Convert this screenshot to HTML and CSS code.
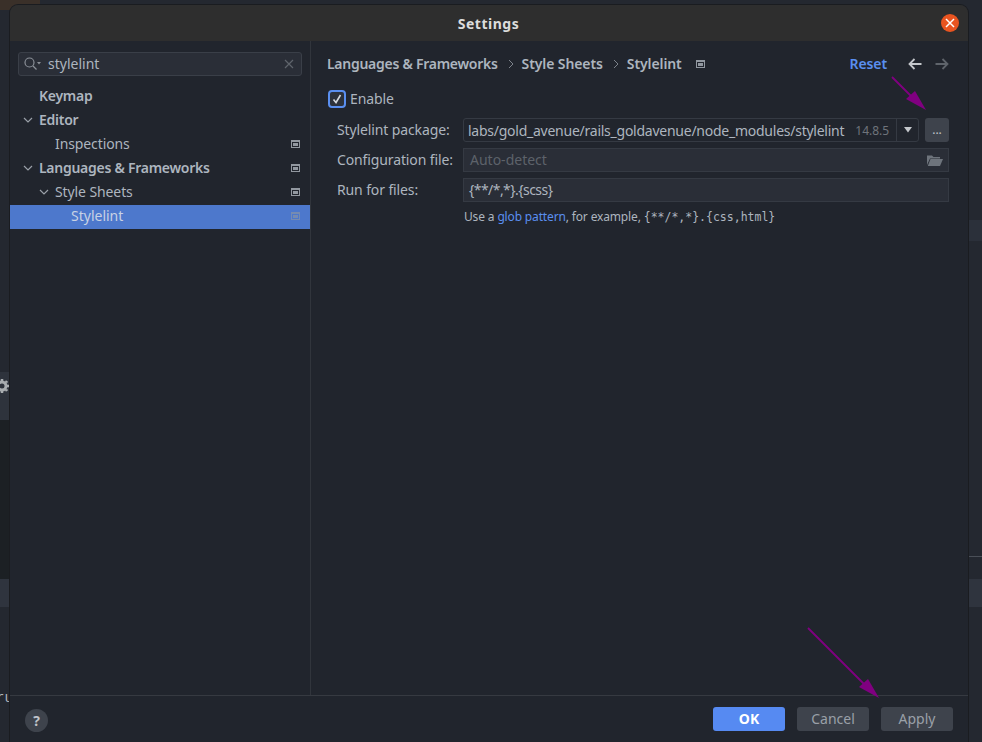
FILE: index.html
```html
<!DOCTYPE html>
<html lang="en">
<head>
    <meta charset="UTF-8">
    <title>Settings</title>
    <link rel="stylesheet" href="styles.css">
</head>
<body>
    <!-- editor behind the dialog -->
    <div class="backdrop">
        <div class="bg-tab"></div>
        <div class="bg-code">
            <span class="bg-num">76</span>
            <span class="bg-brace">{}</span>
            <span class="bg-key">"devDependencies"</span>
            <span class="bg-colon">:</span>
            <span class="bg-caret"></span>
        </div>
        <div class="bg-tool"><svg width="16" height="16" viewBox="0 0 16 16"><circle cx="2" cy="8" r="4" fill="none" stroke="#a9adb0" stroke-width="3"/><path d="M2 1v2M2 13v2M7 3L6 4.500M7 13l-1-1.500M9 8H7" stroke="#a9adb0" stroke-width="2.500"/></svg></div>
        <div class="bg-dark"></div>
        <div class="bg-strip-l"></div>
        <div class="bg-run">ru</div>
        <div class="bg-patch-r1"></div>
        <div class="bg-line-r"></div>
        <div class="bg-patch-r2"></div>
    </div>

    <div class="dialog">
        <div class="titlebar">
            <span class="title">Settings</span>
            <span class="close"><svg width="10" height="10" viewBox="0 0 10 10"><path d="M1 1l8 8M9 1l-8 8" stroke="#fff" stroke-width="1.500"/></svg></span>
        </div>

        <div class="main">
            <div class="sidebar">
                <div class="search">
                    <svg class="search-icon" width="20" height="16" viewBox="0 0 20 16"><circle cx="6.500" cy="6.500" r="4.500" fill="none" stroke="#8b9098" stroke-width="1.200"/><path d="M10 10l3.500 3.500" stroke="#8b9098" stroke-width="1.200"/><path d="M14 6h4l-2 2.500z" fill="#8b9098"/></svg>
                    <span class="search-text">stylelint</span>
                    <svg class="search-clear" width="10" height="10" viewBox="0 0 10 10"><path d="M1 1l8 8M9 1l-8 8" stroke="#5f646c" stroke-width="1.200"/></svg>
                </div>
                <ul class="tree">
                    <li class="row bold lvl0">Keymap</li>
                    <li class="row bold lvl0">
                        <svg class="chev" width="10" height="6" viewBox="0 0 10 6"><path d="M1 1l4 4 4-4" fill="none" stroke="#9aa0a8" stroke-width="1.200"/></svg>Editor
                    </li>
                    <li class="row lvl1">Inspections<i class="proj"></i></li>
                    <li class="row bold lvl0">
                        <svg class="chev" width="10" height="6" viewBox="0 0 10 6"><path d="M1 1l4 4 4-4" fill="none" stroke="#9aa0a8" stroke-width="1.200"/></svg>Languages &amp; Frameworks<i class="proj"></i>
                    </li>
                    <li class="row lvl1">
                        <svg class="chev" width="10" height="6" viewBox="0 0 10 6"><path d="M1 1l4 4 4-4" fill="none" stroke="#9aa0a8" stroke-width="1.200"/></svg>Style Sheets<i class="proj"></i>
                    </li>
                    <li class="row lvl2 selected">Stylelint<i class="proj"></i></li>
                </ul>
            </div>

            <div class="content">
                <div class="crumbs">
                    <span class="crumb-long">Languages &amp; Frameworks</span>
                    <svg class="sep" width="6" height="10" viewBox="0 0 6 10"><path d="M1 1l4 4-4 4" fill="none" stroke="#7d838b" stroke-width="1"/></svg>
                    <span>Style Sheets</span>
                    <svg class="sep" width="6" height="10" viewBox="0 0 6 10"><path d="M1 1l4 4-4 4" fill="none" stroke="#7d838b" stroke-width="1"/></svg>
                    <span>Stylelint</span>
                    <i class="proj crumb-proj"></i>
                    <span class="reset">Reset</span>
                    <svg class="nav-back" width="14" height="12" viewBox="0 0 14 12"><path d="M13.500 6H1.500M6.500 1l-5 5 5 5" fill="none" stroke="#c5c8cc" stroke-width="1.800"/></svg>
                    <svg class="nav-next" width="14" height="12" viewBox="0 0 14 12"><path d="M.5 6h12M7.500 1l5 5-5 5" fill="none" stroke="#5f646b" stroke-width="1.800"/></svg>
                </div>

                <div class="enable">
                    <span class="check"><svg width="12" height="12" viewBox="0 0 12 12"><path d="M2.500 6.500l2.500 3 4.500-7.500" fill="none" stroke="#d5d8dc" stroke-width="1.600"/></svg></span>
                    <span class="enable-text">Enable</span>
                </div>

                <div class="form">
                    <label class="lbl">Stylelint package:</label>
                    <div class="pkg">
                        <div class="combo">
                            <span class="combo-path">labs/gold_avenue/rails_goldavenue/node_modules/stylelint</span>
                            <span class="version">14.8.5</span>
                            <span class="combo-arrow"><svg width="10" height="6" viewBox="0 0 10 6"><path d="M1 0h8L5 5.500z" fill="#c5c8cc"/></svg></span>
                        </div>
                        <span class="dots">...</span>
                    </div>

                    <label class="lbl">Configuration file:</label>
                    <div class="field">
                        <span class="placeholder">Auto-detect</span>
                        <svg class="folder" width="16" height="12" viewBox="0 0 16 12"><path d="M0 1.500h5l1.500 1.500h6.500v1.500H3L0 11z" fill="#6e747c"/><path d="M3.500 5H16l-3 7H.8z" fill="#6e747c"/></svg>
                    </div>

                    <label class="lbl">Run for files:</label>
                    <div class="field"><span class="glob">{**/*,*}.{scss}</span></div>
                </div>

                <div class="hint">Use a <a class="link">glob pattern</a>, for example, <code>{**/*,*}.{css,html}</code></div>
            </div>
        </div>

        <div class="footer">
            <span class="help">?</span>
            <div class="buttons">
                <button class="btn primary">OK</button>
                <button class="btn">Cancel</button>
                <button class="btn">Apply</button>
            </div>
        </div>
    </div>

    <!-- arrows drawn on top of the screenshot -->
    <svg class="arrows" width="982" height="742" viewBox="0 0 982 742">
        <path d="M892 77L912 97M808 628L865 685" stroke="#800080" stroke-width="1.800"/>
        <path d="M926 110L906 99L915 91z" fill="#800080"/>
        <path d="M879 698L859 687L868 679z" fill="#800080"/>
    </svg>
</body>
</html>
```

FILE: styles.css
```css
* {
    box-sizing: border-box;
}
html, body {
    height: 100%;
}
body {
    margin: 0;
    overflow: hidden;
    background: #242830;
    color: #adb5bf;
    font-family: "Noto Sans", Arial, sans-serif;
    font-size: 14px;
}

/* background editor */
.backdrop div {
    position: absolute;
}
.bg-tab {
    left: 0;
    top: 0;
    width: 40px;
    height: 10px;
    background: #3a3029;
}
.bg-code {
    left: 47px;
    top: -9px;
    height: 19px;
    white-space: pre;
    font-family: "Liberation Mono", monospace;
    font-size: 13.330px;
    line-height: 19px;
}
.bg-num {
    color: #5b6068;
}
.bg-brace {
    color: #6b7078;
    margin-left: 24px;
}
.bg-key {
    color: #d6394f;
    margin-left: 1px;
}
.bg-colon {
    color: #b8bcc2;
    margin-left: -4px;
}
.bg-caret {
    display: inline-block;
    vertical-align: top;
    width: 1px;
    height: 19px;
    margin-left: 4px;
    background: #c98a3c;
}
.bg-tool {
    left: 0;
    top: 372px;
    width: 10px;
    height: 48px;
    overflow: hidden;
    background: #2e333c;
    padding-top: 6px;
}
.bg-dark {
    left: 0;
    top: 420px;
    width: 10px;
    height: 159px;
    background: #1c2024;
}
.bg-strip-l {
    left: 0;
    top: 579px;
    width: 10px;
    height: 28px;
    background: #2f343e;
}
.bg-run {
    left: 0;
    top: 690px;
    width: 9px;
    overflow: hidden;
    font-family: "Liberation Mono", monospace;
    font-size: 14px;
    color: #b0b5ba;
    text-indent: -4px;
}
.bg-patch-r1 {
    left: 969px;
    top: 220px;
    width: 13px;
    height: 21px;
    background: #2b303a;
}
.bg-line-r {
    left: 969px;
    top: 556px;
    width: 13px;
    height: 1px;
    background: #4a4f57;
}
.bg-patch-r2 {
    left: 969px;
    top: 579px;
    width: 13px;
    height: 28px;
    background: #2f343e;
}

/* dialog */
.dialog {
    position: absolute;
    left: 10px;
    top: 5px;
    width: 958px;
    height: 742px;
    display: flex;
    flex-direction: column;
    background: #21252d;
    border-radius: 8px 8px 0 0;
    box-shadow: 0 0 0 1px #1a1c20;
}
.titlebar {
    position: relative;
    height: 36px;
    flex-shrink: 0;
    background: #2e2e2e;
    border-radius: 8px 8px 0 0;
    text-align: center;
    line-height: 37px;
}
.title {
    color: #dcdcdc;
    font-weight: 700;
    font-size: 14px;
    letter-spacing: 0.5px;
    margin-left: -1px;
}
.close {
    position: absolute;
    right: 9px;
    top: 9px;
    width: 18px;
    height: 18px;
    border-radius: 50%;
    background: #e95420;
    display: flex;
    align-items: center;
    justify-content: center;
}
.main {
    height: 654px;
    flex-shrink: 0;
    display: flex;
}

/* left tree */
.sidebar {
    width: 301px;
    flex-shrink: 0;
    border-right: 1px solid #31353c;
    padding-top: 11px;
}
.search {
    margin: 0 8px;
    height: 24px;
    display: flex;
    align-items: center;
    padding: 0 7px 0 4px;
    background: #2a2e37;
    border: 1px solid #3a3f48;
    border-radius: 3px;
}
.search-icon {
    flex-shrink: 0;
}
.search-text {
    margin-left: 5px;
    margin-top: -2px;
    flex: 1;
}
.tree {
    list-style: none;
    margin: 9px 0 0;
    padding: 0;
    width: 300px;
}
.row {
    position: relative;
    height: 24px;
    line-height: 22px;
    white-space: nowrap;
}
.bold {
    font-weight: 600;
    letter-spacing: -0.27px;
}
.lvl0 {
    padding-left: 29px;
}
.lvl1 {
    padding-left: 45px;
    letter-spacing: -0.1px;
}
.lvl2 {
    padding-left: 61px;
}
.chev {
    position: absolute;
    top: 8px;
    margin-left: -16px;
}
.selected {
    background: #4d78cc;
    color: #c8d2e4;
}
.proj {
    position: absolute;
    right: 10px;
    top: 7px;
    width: 9px;
    height: 8px;
    background: #9298a0;
    border-style: solid;
    border-color: #9298a0;
    border-width: 2px 1px 1px;
    box-shadow: inset 0 0 0 1px #21252d;
}
.selected .proj {
    opacity: 0.6;
    box-shadow: inset 0 0 0 1px #4d78cc;
}

/* right side */
.content {
    flex: 1;
    padding: 11px 19px 0 16px;
    min-width: 0;
}
.crumbs {
    height: 24px;
    display: flex;
    align-items: center;
    font-weight: 600;
    padding-bottom: 1px;
    letter-spacing: -0.1px;
}
.crumb-long {
    letter-spacing: -0.27px;
}
.sep {
    margin: 0 8px 0 10px;
}
.crumb-proj {
    position: static;
    margin-left: 14px;
    margin-top: 1px;
    flex-shrink: 0;
}
.reset {
    margin-left: auto;
    color: #5a8ff0;
}
.nav-back {
    margin-left: 21px;
}
.nav-next {
    margin-left: 13px;
}
.enable {
    display: flex;
    align-items: center;
    gap: 4px;
    margin-top: 11px;
    height: 24px;
}
.enable-text {
    margin-top: -2px;
    letter-spacing: -0.1px;
}
.check {
    width: 18px;
    height: 18px;
    margin-left: 1px;
    border: 2px solid #5a8ff0;
    border-radius: 4px;
    background: #2d323b;
    display: flex;
    align-items: center;
    justify-content: center;
}
.form {
    display: grid;
    grid-template-columns: 126px 1fr;
    row-gap: 6px;
    margin-top: 7px;
    padding-left: 10px;
}
.lbl {
    line-height: 24px;
    white-space: nowrap;
    letter-spacing: -0.12px;
}
.pkg {
    display: flex;
    gap: 6px;
    height: 24px;
}
.combo {
    flex: 1;
    min-width: 0;
    display: flex;
    align-items: center;
    border: 1px solid #353a43;
    border-radius: 3px;
    padding-left: 4px;
}
.combo-path {
    white-space: nowrap;
    letter-spacing: -0.25px;
}
.version {
    color: #6f747b;
    font-size: 12px;
    margin-left: 11px;
    flex: 1;
}
.combo-arrow {
    width: 22px;
    height: 22px;
    border-left: 1px solid #353a43;
    display: flex;
    align-items: center;
    justify-content: center;
    flex-shrink: 0;
}
.dots {
    width: 24px;
    height: 24px;
    flex-shrink: 0;
    border-radius: 3px;
    background: #3e434c;
    text-align: center;
    line-height: 24px;
    font-size: 12px;
    color: #c0c4ca;
}
.field {
    height: 24px;
    line-height: 22px;
    padding: 0 6px;
    background: #2a2e37;
    border: 1px solid #353a43;
    display: flex;
    align-items: center;
    justify-content: space-between;
}
.glob {
    margin-left: -1px;
    letter-spacing: -0.55px;
}
.placeholder {
    color: #5d626a;
}
.folder {
    margin-right: -1px;
}
.hint {
    margin: 5px 0 0 137px;
    height: 20px;
    line-height: 20px;
    font-size: 12px;
    white-space: nowrap;
    letter-spacing: -0.15px;
}
.link {
    color: #5a8ff0;
}
code {
    font-family: "DejaVu Sans Mono", monospace;
    font-size: 11.500px;
    letter-spacing: 0;
}

/* footer */
.footer {
    border-top: 1px solid #363a41;
    height: 60px;
    flex-shrink: 0;
    display: flex;
    padding: 11px 15px 0 15px;
    justify-content: space-between;
    align-items: flex-start;
}
.help {
    width: 23px;
    height: 23px;
    margin-top: 2px;
    border-radius: 50%;
    background: #3e434c;
    color: #c0c4ca;
    font-weight: 700;
    text-align: center;
    line-height: 23px;
}
.buttons {
    display: flex;
    gap: 12px;
}
.btn {
    width: 72px;
    height: 24px;
    padding: 0 0 2px;
    border: none;
    border-radius: 3px;
    background: #3e434c;
    color: #9aa0a8;
    font-family: inherit;
    font-size: 14px;
}
.primary {
    background: #568af2;
    color: #fff;
    font-weight: 700;
}
.arrows {
    position: absolute;
    left: 0;
    top: 0;
    pointer-events: none;
}
```
